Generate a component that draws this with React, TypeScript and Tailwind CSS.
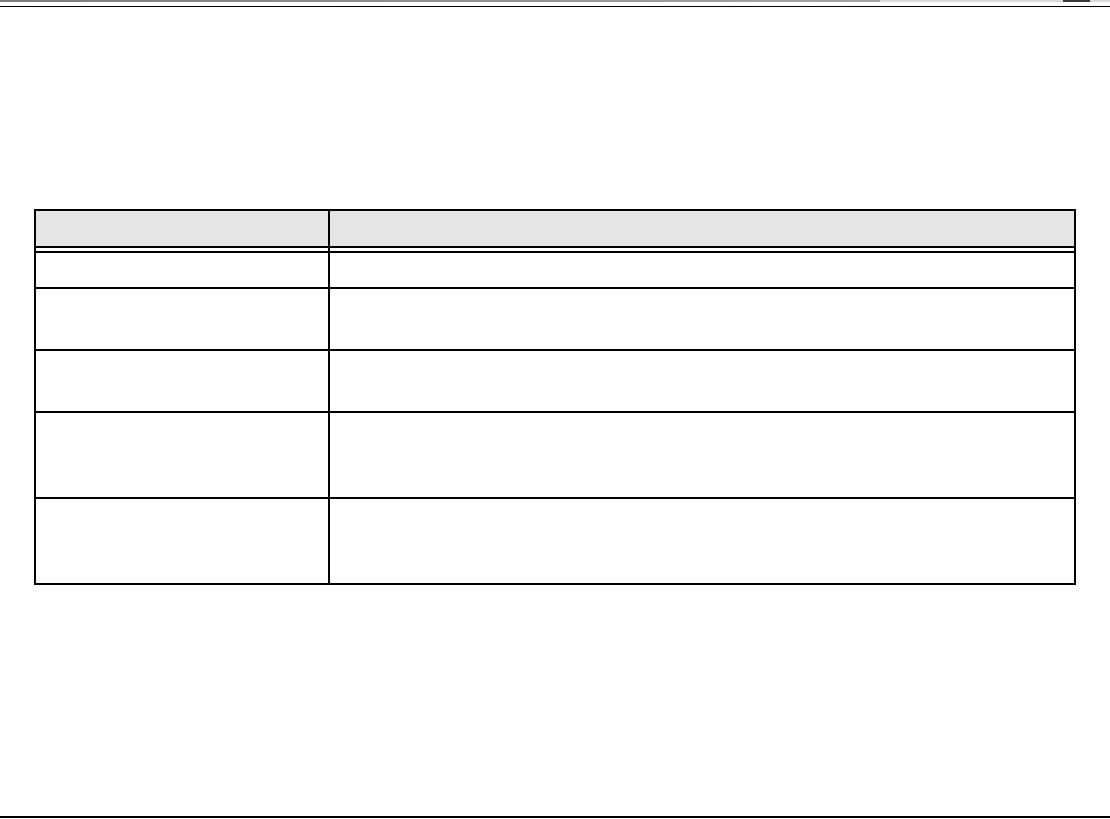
const rows = [34, 60, 60, 84, 84];

function TableRow({ height }: { height: number }) {
  return (
    <div className="grid grid-cols-[294px_1fr] border-t-2 border-black" style={{ height }}>
      <div className="border-r-2 border-black" />
      <div />
    </div>
  );
}

export default function App() {
  return (
    <div className="flex h-[819px] w-[1110px] flex-col bg-white font-['Liberation_Sans',Arial,sans-serif]">
      <div className="flex h-[2px]">
        <div className="w-[880px] bg-gradient-to-r from-[#7c7c7c] to-[#a6a6a6]" />
        <div className="w-[183px] bg-[#dadada]" />
        <div className="w-[27px] bg-[#3a3a3a]" />
        <div className="flex-1 bg-[#dadada]" />
      </div>
      <div className="mt-[4px] h-px bg-black" />

      <div className="ml-[34px] mt-[202px] w-[1042px] border-2 border-black">
        <div className="grid h-[35px] grid-cols-[294px_1fr] bg-[#e5e5e5]">
          <div className="border-r-2 border-black" />
          <div />
        </div>
        <div className="grid h-[5px] grid-cols-[294px_1fr] border-t-2 border-black">
          <div className="border-r-2 border-black" />
          <div />
        </div>
        {rows.map((h, i) => (
          <TableRow key={i} height={h + 2} />
        ))}
      </div>

      <div className="mt-auto mb-px h-[2px] bg-black" />
    </div>
  );
}
